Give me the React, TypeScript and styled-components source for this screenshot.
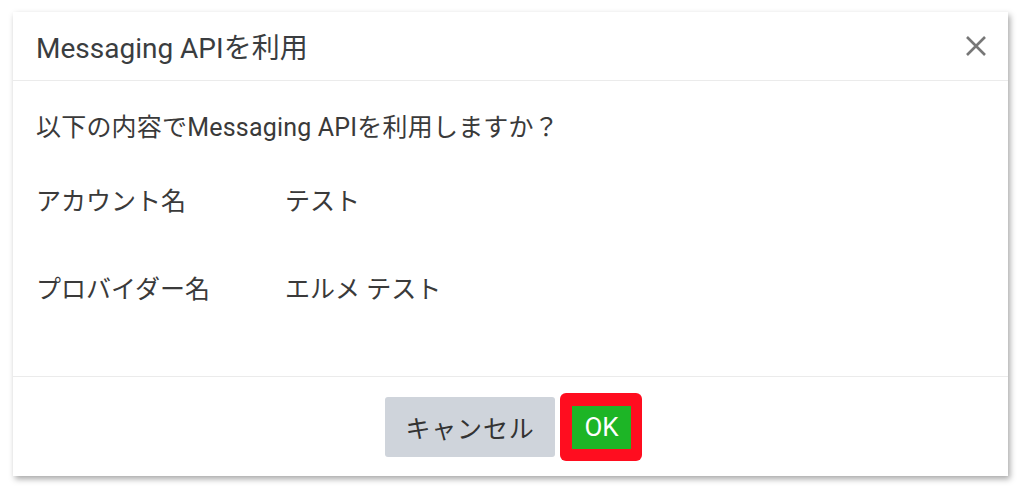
import React from "react";
import styled, { createGlobalStyle } from "styled-components";

const GlobalStyle = createGlobalStyle`
    body {
        margin: 0;
        background: #ffffff;
        font-family: Roboto, "Noto Sans CJK JP", sans-serif;
        color: #3a3a3a;
    }
`;

interface RowData {
    label: string;
    value: string;
}

const rows: RowData[] = [
    { label: "アカウント名", value: "テスト" },
    { label: "プロバイダー名", value: "エルメ テスト" },
];

const Page = styled.div`
    padding: 12px 16px 18px 13px;
`;

const Dialog = styled.div`
    width: 995px;
    height: 464px;
    background: #ffffff;
    box-shadow: 2px 3px 6px rgba(0, 0, 0, 0.35);
    display: flex;
    flex-direction: column;
`;

const Header = styled.div`
    height: 68px;
    flex-shrink: 0;
    display: flex;
    align-items: center;
    justify-content: space-between;
    padding: 0 20px 0 23px;
    border-bottom: 1px solid #ebebeb;
`;

const Title = styled.div`
    font-size: 28px;
    color: #3a3d40;
`;

const CloseButton = styled.button`
    width: 24px;
    height: 24px;
    padding: 0;
    border: none;
    background: none;
    display: flex;
    align-items: center;
    justify-content: center;
`;

const Body = styled.div`
    flex: 1;
    padding: 31px 23px 0;
    border-bottom: 1px solid #ebebeb;
`;

const Message = styled.div`
    font-size: 25px;
    line-height: 32px;
    letter-spacing: 0.2px;
    margin-bottom: 42px;
`;

const Row = styled.div<{ gap: number }>`
    display: flex;
    font-size: 25px;
    line-height: 32px;
    margin-bottom: ${({ gap }) => gap}px;
`;

const Label = styled.div`
    width: 249px;
`;

const Footer = styled.div`
    height: 99px;
    flex-shrink: 0;
    display: flex;
    align-items: center;
    justify-content: center;
    gap: 5px;
    padding-left: 6px;
`;

const CancelButton = styled.button`
    width: 170px;
    height: 60px;
    border: none;
    border-radius: 3px;
    background: #cfd4db;
    color: #333333;
    font-family: inherit;
    font-size: 25px;
    letter-spacing: 0.8px;
`;

const Highlight = styled.div`
    padding: 13px 11px 12px 12px;
    border-radius: 6px;
    background: #ff0d1f;
`;

const OkButton = styled.button`
    width: 59px;
    height: 43px;
    border: none;
    background: #1db526;
    color: #ffffff;
    font-family: inherit;
    font-size: 26px;
    padding: 0;
`;

const App: React.FC = () => {
    return (
        <Page>
            <GlobalStyle />
            <Dialog>
                <Header>
                    <Title>Messaging APIを利用</Title>
                    <CloseButton aria-label="close">
                        <svg width="22" height="22" viewBox="0 0 22 22">
                            <path d="M2 2 L20 20 M20 2 L2 20" stroke="#777" strokeWidth="2.6" />
                        </svg>
                    </CloseButton>
                </Header>
                <Body>
                    <Message>以下の内容でMessaging APIを利用しますか？</Message>
                    {rows.map((row, i) => (
                        <Row key={row.label} gap={i === 0 ? 56 : 0}>
                            <Label>{row.label}</Label>
                            <div>{row.value}</div>
                        </Row>
                    ))}
                </Body>
                <Footer>
                    <CancelButton>キャンセル</CancelButton>
                    <Highlight>
                        <OkButton>OK</OkButton>
                    </Highlight>
                </Footer>
            </Dialog>
        </Page>
    );
};

export default App;
